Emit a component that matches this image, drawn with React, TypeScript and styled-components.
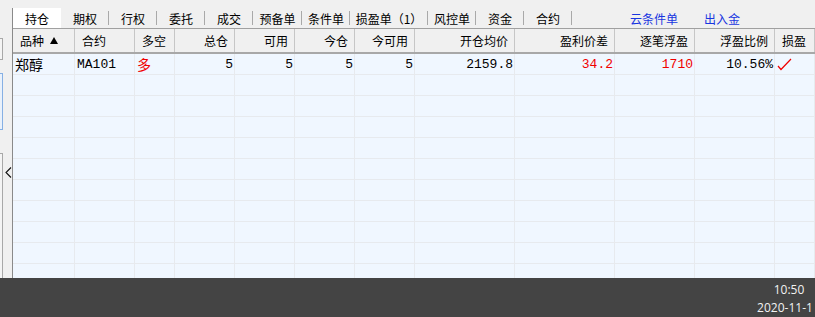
import React from "react";
import styled, { createGlobalStyle } from "styled-components";

const GlobalStyle = createGlobalStyle`
  *, *::before, *::after { box-sizing: border-box; }
  html, body { margin: 0; padding: 0; background: #f0f0f0; }
  body { font-family: "Noto Sans CJK SC", "Noto Sans", sans-serif; color: #000; }
`;

const COLS = "62px 60px 40px 60px 60px 60px 60px 100px 100px 80px 80px 1fr";
const MONO = `"Liberation Mono", "Noto Sans CJK SC", monospace`;

const Screen = styled.div`
  width: 815px;
  height: 317px;
  display: flex;
  flex-direction: column;
  overflow: hidden;
  background: #f0f0f0;
`;

const Workspace = styled.div`
  display: flex;
  height: 278px;
`;

const Rail = styled.div`
  width: 12px;
  flex: none;
  display: flex;
  flex-direction: column;
`;

const RailTab = styled.div<{ $top?: number; $height?: number; $accent?: boolean; $open?: boolean }>`
  margin-top: ${({ $top }) => $top ?? 0}px;
  width: 3px;
  height: ${({ $height }) => ($height ? `${$height}px` : "auto")};
  border: 1px solid ${({ $accent }) => ($accent ? "#86b0e4" : "#a8a8a8")};
  border-left: none;
  border-bottom: ${({ $open }) => ($open ? "none" : undefined)};
  background: ${({ $accent }) => ($accent ? "#e9f1fb" : "#f4f4f4")};
`;

const RailGroup = styled.div`
  display: flex;
  flex: 1;
  margin-top: 23px;
`;

const Collapse = styled.svg`
  margin: 14px 0 0 2px;
  flex: none;
`;

const Main = styled.div`
  flex: 1;
  min-width: 0;
  margin-top: 8px;
  display: flex;
  flex-direction: column;
  border-left: 1px solid #8a8a8a;
`;

const TabBar = styled.div`
  height: 20px;
  display: flex;
  flex: none;
`;

const Tab = styled.div<{ $width: number; $active?: boolean }>`
  position: relative;
  width: ${({ $width }) => $width}px;
  flex: none;
  display: flex;
  align-items: center;
  justify-content: center;
  font-size: 12px;
  white-space: nowrap;
  background: ${({ $active }) => ($active ? "#ffffff" : "transparent")};

  &::after {
    content: "";
    display: ${({ $active }) => ($active ? "none" : "block")};
    position: absolute;
    right: 0;
    top: 3px;
    bottom: 3px;
    width: 1px;
    background: #a9a9a9;
  }
`;

const Links = styled.div`
  display: flex;
  align-items: center;
  gap: 26px;
  margin-left: 58px;
`;

const LinkText = styled.span`
  font-size: 12px;
  color: #1836e0;
  cursor: pointer;
`;

const Table = styled.div`
  flex: 1;
  overflow: hidden;
  border-top: 1px solid #a0a0a0;
  background: #f0f7ff;
`;

const HeaderRow = styled.div`
  display: grid;
  grid-template-columns: ${COLS};
  height: 25px;
  background: #f0f0f0;
  border-bottom: 2px solid #a8a8a8;
`;

const HeaderCell = styled.div<{ $align: "left" | "right" }>`
  display: flex;
  align-items: center;
  justify-content: ${({ $align }) => ($align === "right" ? "flex-end" : "flex-start")};
  padding: 0 6px 0 7px;
  font-size: 12px;
  white-space: nowrap;
  border-right: 1px solid #c6c6c6;
`;

const SortMark = styled.svg`
  margin-left: 6px;
`;

const DataRow = styled.div`
  display: grid;
  grid-template-columns: ${COLS};
  height: 21px;
  border-bottom: 1px solid #e7eaee;
`;

const DataCell = styled.div<{ $align?: "left" | "right"; $mono?: boolean; $color?: string }>`
  display: flex;
  align-items: center;
  justify-content: ${({ $align }) => ($align === "right" ? "flex-end" : "flex-start")};
  padding: 0 1px 0 2px;
  white-space: nowrap;
  overflow: hidden;
  border-right: 1px solid #e7eaee;
  font-family: ${({ $mono }) => ($mono ? MONO : `"Noto Sans CJK SC", sans-serif`)};
  font-size: ${({ $mono }) => ($mono ? 13 : 14)}px;
  color: ${({ $color }) => $color ?? "#000"};
`;

const Taskbar = styled.div`
  height: 39px;
  flex: none;
  background: #444444;
  display: flex;
  justify-content: flex-end;
  overflow: hidden;
`;

const Clock = styled.div`
  width: 64px;
  margin-right: -6px;
  display: flex;
  flex-direction: column;
  align-items: center;
  padding-top: 3px;
  font-family: "Open Sans", "Noto Sans", sans-serif;
  font-size: 12px;
  line-height: 18px;
  color: #f2f2f2;
  white-space: nowrap;
`;

const ClockDate = styled.span`
  margin-right: 8px;
`;

const tabs = [
  { label: "持仓", width: 48, active: true },
  { label: "期权", width: 48 },
  { label: "行权", width: 48 },
  { label: "委托", width: 48 },
  { label: "成交", width: 48 },
  { label: "预备单", width: 49 },
  { label: "条件单", width: 48 },
  { label: "损盈单（1）", width: 78 },
  { label: "风控单", width: 48 },
  { label: "资金", width: 48 },
  { label: "合约", width: 48 },
];

const columns: { title: string; align: "left" | "right" }[] = [
  { title: "品种", align: "left" },
  { title: "合约", align: "left" },
  { title: "多空", align: "left" },
  { title: "总仓", align: "right" },
  { title: "可用", align: "right" },
  { title: "今仓", align: "right" },
  { title: "今可用", align: "right" },
  { title: "开仓均价", align: "right" },
  { title: "盈利价差", align: "right" },
  { title: "逐笔浮盈", align: "right" },
  { title: "浮盈比例", align: "right" },
  { title: "损盈", align: "left" },
];

const RED = "#f00000";
const EMPTY_ROWS = 10;

export default function App() {
  return (
    <Screen>
      <GlobalStyle />
      <Workspace>
        <Rail>
          <RailTab $top={38} $height={22} />
          <RailTab $top={13} $height={57} $accent />
          <RailGroup>
            <RailTab $open />
            <Collapse width="7" height="11" viewBox="0 0 7 11">
              <polyline points="6,0.5 1,5.5 6,10.5" fill="none" stroke="#111" strokeWidth="1.1" />
            </Collapse>
          </RailGroup>
        </Rail>
        <Main>
          <TabBar>
            {tabs.map((t) => (
              <Tab key={t.label} $width={t.width} $active={t.active}>
                {t.label}
              </Tab>
            ))}
            <Links>
              <LinkText>云条件单</LinkText>
              <LinkText>出入金</LinkText>
            </Links>
          </TabBar>
          <Table>
            <HeaderRow>
              {columns.map((c, i) => (
                <HeaderCell key={c.title} $align={c.align}>
                  {c.title}
                  {i === 0 && (
                    <SortMark width="8" height="7" viewBox="0 0 8 7">
                      <polygon points="4,0 8,7 0,7" fill="#000" />
                    </SortMark>
                  )}
                </HeaderCell>
              ))}
            </HeaderRow>
            <DataRow>
              <DataCell>郑醇</DataCell>
              <DataCell $mono>MA101</DataCell>
              <DataCell $color={RED}>多</DataCell>
              <DataCell $align="right" $mono>5</DataCell>
              <DataCell $align="right" $mono>5</DataCell>
              <DataCell $align="right" $mono>5</DataCell>
              <DataCell $align="right" $mono>5</DataCell>
              <DataCell $align="right" $mono>2159.8</DataCell>
              <DataCell $align="right" $mono $color={RED}>34.2</DataCell>
              <DataCell $align="right" $mono $color={RED}>1710</DataCell>
              <DataCell $align="right" $mono>10.56%</DataCell>
              <DataCell>
                <svg width="15" height="13" viewBox="0 0 15 13">
                  <polyline points="1,8 4,11.5 14,1" fill="none" stroke={RED} strokeWidth="1.2" />
                </svg>
              </DataCell>
            </DataRow>
            {Array.from({ length: EMPTY_ROWS }).map((_, r) => (
              <DataRow key={r}>
                {columns.map((c) => (
                  <DataCell key={c.title} />
                ))}
              </DataRow>
            ))}
          </Table>
        </Main>
      </Workspace>
      <Taskbar>
        <Clock>
          <span>10:50</span>
          <ClockDate>2020-11-1</ClockDate>
        </Clock>
      </Taskbar>
    </Screen>
  );
}
